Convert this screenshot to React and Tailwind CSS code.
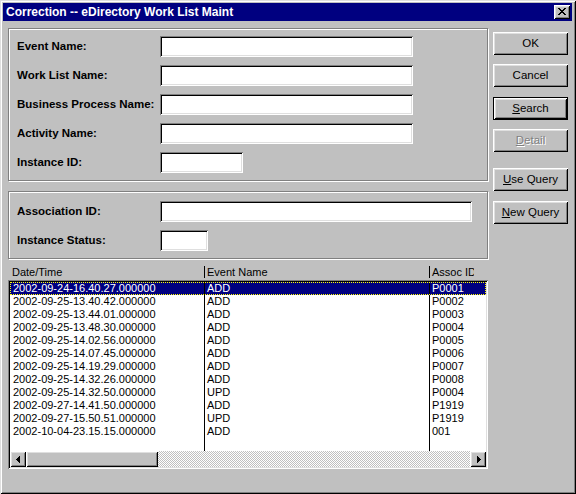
import React from "react";

const raised =
  "shadow-[inset_1px_1px_0_#fff,inset_-1px_-1px_0_#000,inset_2px_2px_0_#dfdfdf,inset_-2px_-2px_0_#808080]";
const sunken =
  "shadow-[inset_1px_1px_0_#808080,inset_-1px_-1px_0_#fff,inset_2px_2px_0_#000,inset_-2px_-2px_0_#dfdfdf]";

const rows = [
  ["2002-09-24-16.40.27.000000", "ADD", "P0001"],
  ["2002-09-25-13.40.42.000000", "ADD", "P0002"],
  ["2002-09-25-13.44.01.000000", "ADD", "P0003"],
  ["2002-09-25-13.48.30.000000", "ADD", "P0004"],
  ["2002-09-25-14.02.56.000000", "ADD", "P0005"],
  ["2002-09-25-14.07.45.000000", "ADD", "P0006"],
  ["2002-09-25-14.19.29.000000", "ADD", "P0007"],
  ["2002-09-25-14.32.26.000000", "ADD", "P0008"],
  ["2002-09-25-14.32.50.000000", "UPD", "P0004"],
  ["2002-09-27-14.41.50.000000", "ADD", "P1919"],
  ["2002-09-27-15.50.51.000000", "UPD", "P1919"],
  ["2002-10-04-23.15.15.000000", "ADD", "001"],
];

const Field = ({ width }) => (
  <div className={`h-[21px] bg-white ${sunken}`} style={{ width }} />
);

const Label = ({ children }) => (
  <div className="h-[21px] flex items-center text-[11.5px] font-bold text-black">
    {children}
  </div>
);

const Button = ({ children, isDefault, disabled, className = "" }) => (
  <div
    className={`h-[23px] w-[75px] bg-[#c0c0c0] flex items-center justify-center text-[11.5px] ${
      isDefault ? "border border-black" : ""
    } ${className}`}
  >
    <div
      className={`w-full h-full flex items-center justify-center ${raised} ${
        disabled ? "text-[#808080] [text-shadow:1px_1px_0_#fff]" : "text-black"
      }`}
    >
      {children}
    </div>
  </div>
);

const Arrow = ({ right }) => (
  <div className={`w-[16px] h-[16px] bg-[#c0c0c0] flex items-center justify-center ${raised}`}>
    <svg width="4" height="7" viewBox="0 0 4 7" shapeRendering="crispEdges" className={right ? "ml-[1px]" : "-ml-[1px]"}>
      {right ? (
        <path d="M0 0h1v7H0z M1 1h1v5H1z M2 2h1v3H2z M3 3h1v1H3z" fill="#000" />
      ) : (
        <path d="M3 0h1v7H3z M2 1h1v5H2z M1 2h1v3H1z M0 3h1v1H0z" fill="#000" />
      )}
    </svg>
  </div>
);

export default function App() {
  return (
    <div
      className={`w-[576px] h-[494px] bg-[#c0c0c0] p-[3px] font-['Liberation_Sans',Arial,sans-serif] shadow-[inset_1px_1px_0_#dfdfdf,inset_-1px_-1px_0_#000,inset_2px_2px_0_#fff,inset_-2px_-2px_0_#808080]`}
    >
      {/* title bar */}
      <div className="h-[18px] w-[569px] bg-[#000080] flex items-center pl-[3px] pr-[2px]">
        <span className="text-white font-bold text-[12px] leading-none">
          Correction -- eDirectory Work List Maint
        </span>
        <div className={`ml-auto w-[16px] h-[14px] bg-[#c0c0c0] flex items-center justify-center ${raised}`}>
          <svg width="8" height="7" viewBox="0 0 8 7" shapeRendering="crispEdges" className="-mt-[1px] -ml-[1px]">
            <path
              d="M0 0h2v1H0z M6 0h2v1H6z M1 1h2v1H1z M5 1h2v1H5z M2 2h4v1H2z M3 3h2v1H3z M2 4h4v1H2z M1 5h2v1H1z M5 5h2v1H5z M0 6h2v1H0z M6 6h2v1H6z"
              fill="#000"
            />
          </svg>
        </div>
      </div>

      <div className="flex pt-[7px] pl-[5px]">
        {/* left column */}
        <div className="w-[480px]">
          <div className="h-[153px] border border-[#808080] shadow-[1px_1px_0_#fff,inset_1px_1px_0_#fff] pt-[7px] pl-[8px]">
            <div className="grid grid-cols-[143px_auto] gap-y-[8px]">
              <Label>Event Name:</Label>
              <Field width={253} />
              <Label>Work List Name:</Label>
              <Field width={253} />
              <Label>Business Process Name:</Label>
              <Field width={253} />
              <Label>Activity Name:</Label>
              <Field width={253} />
              <Label>Instance ID:</Label>
              <Field width={83} />
            </div>
          </div>

          <div className="mt-[10px] h-[68px] border border-[#808080] shadow-[1px_1px_0_#fff,inset_1px_1px_0_#fff] pt-[9px] pl-[8px]">
            <div className="grid grid-cols-[143px_auto] gap-y-[8px]">
              <Label>Association ID:</Label>
              <Field width={312} />
              <Label>Instance Status:</Label>
              <Field width={48} />
            </div>
          </div>

          {/* column headers */}
          <div className="mt-[5px] h-[16px] flex items-center text-[11px] text-black">
            <div className="w-[196px] pl-[4px]">Date/Time</div>
            <div className="w-[225px] flex items-center">
              <div className="w-px h-[12px] bg-black" />
              <span className="pl-[2px]">Event Name</span>
            </div>
            <div className="w-[45px] flex items-center overflow-hidden whitespace-nowrap">
              <div className="w-px h-[12px] bg-black shrink-0" />
              <span className="pl-[2px]">Assoc ID</span>
            </div>
          </div>

          {/* list */}
          <div className={`h-[189px] bg-white p-[2px] flex flex-col ${sunken}`}>
            <div className="flex-1 flex flex-col text-[11px] leading-[13px] text-black">
              {rows.map((r, i) => {
                const sel = i === 0;
                return (
                  <div
                    key={i}
                    className={`h-[13px] flex ${
                      sel
                        ? "bg-[#000080] text-white outline-1 outline-dotted outline-[#ffff00] -outline-offset-1"
                        : ""
                    }`}
                  >
                    <div className="w-[194px] pl-[3px]">{r[0]}</div>
                    <div className="w-[225px] border-l border-black pl-[2px]">{r[1]}</div>
                    <div className="flex-1 border-l border-black pl-[2px]">{r[2]}</div>
                  </div>
                );
              })}
              <div className="flex-1 flex">
                <div className="w-[194px]" />
                <div className="w-[225px] border-l border-black" />
                <div className="flex-1 border-l border-black" />
              </div>
            </div>
            <div className="h-[16px] flex">
              <Arrow />
              <div className={`w-[132px] h-[16px] bg-[#c0c0c0] ${raised}`} />
              <div className="flex-1 bg-[image:repeating-conic-gradient(#c0c0c0_0_25%,#fff_0_50%)] bg-[length:2px_2px]" />
              <Arrow right />
            </div>
          </div>
        </div>

        {/* buttons */}
        <div className="ml-[5px] mt-[4px] flex flex-col">
          <Button>OK</Button>
          <Button className="mt-[9px]">Cancel</Button>
          <Button isDefault className="mt-[10px]">
            <span>
              <span className="underline underline-offset-1">S</span>earch
            </span>
          </Button>
          <Button disabled className="mt-[9px]">
            <span>
              <span className="underline underline-offset-1">D</span>etail
            </span>
          </Button>
          <Button className="mt-[16px]">
            <span>
              <span className="underline underline-offset-1">U</span>se Query
            </span>
          </Button>
          <Button className="mt-[10px]">
            <span>
              <span className="underline underline-offset-1">N</span>ew Query
            </span>
          </Button>
        </div>
      </div>
    </div>
  );
}
